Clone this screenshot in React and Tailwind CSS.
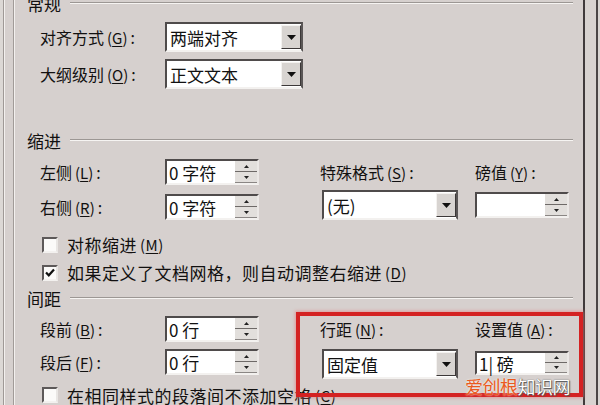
import React from 'react'

const Key = ({ k }) => (
  <span className="ml-[3px] text-[15px]">
    (<span className="underline underline-offset-2">{k}</span>)
  </span>
)

const Label = ({ text, k, colon = true, className = '' }) => (
  <div className={`flex items-center text-[16px] leading-none text-[#121010] ${className}`}>
    <span>{text}</span>
    <Key k={k} />
    {colon && <span className="ml-[3px]">:</span>}
  </div>
)

const Header = ({ title, className = '' }) => (
  <div className={`flex items-center h-[16px] pl-[12px] pr-[10px] ${className}`}>
    <span className="text-[17px] leading-none text-[#121010]">{title}</span>
    <div className="flex-1 ml-[9px] h-[2px] bg-[#9c9794] border-b border-[#f6f4f2]" />
  </div>
)

const Arrow = ({ up = false, size = 'big' }) =>
  size === 'big' ? (
    <svg width="9" height="5" viewBox="0 0 9 5">
      <polygon points="0,0 9,0 4.5,5" fill="#111" />
    </svg>
  ) : (
    <svg width="5" height="3" viewBox="0 0 5 3">
      <polygon points={up ? '0,3 5,3 2.5,0' : '0,0 5,0 2.5,3'} fill="#222" />
    </svg>
  )

const Combo = ({ text, className = '' }) => (
  <div
    className={`flex bg-white border-2 border-t-[#4f4b4b] border-l-[#4f4b4b] border-r-[#5a5656] border-b-[#f3f1ef] ${className}`}
  >
    <div className="flex-1 flex items-center pl-[3px] text-[17px] leading-none text-[#111]">{text}</div>
    <div className="w-[20px] my-[1px] bg-[#d8d4d1] border border-t-[#f4f2f0] border-l-[#f4f2f0] border-b-[#3c3838] border-r-[#3c3838] flex items-center justify-center">
      <Arrow />
    </div>
  </div>
)

const Spin = ({ text, className = '' }) => (
  <div
    className={`flex bg-white border-2 border-t-[#4f4b4b] border-l-[#4f4b4b] border-r-[#ebe8e6] border-b-[#f3f1ef] ${className}`}
  >
    <div className="flex-1 flex items-center pl-[2px] text-[17px] leading-none text-[#111]">{text}</div>
    <div className="w-[22px] flex flex-col bg-[#e2dfdc]">
      <div className="flex-1 flex items-center justify-center border-b border-[#6e6a68]">
        <Arrow up size="small" />
      </div>
      <div className="flex-1 flex items-center justify-center border-b border-[#8a8684]">
        <Arrow size="small" />
      </div>
    </div>
  </div>
)

const Check = ({ checked = false, children, className = '' }) => (
  <div className={`flex items-center h-[20px] pl-[27px] ${className}`}>
    <div className="w-[16px] h-[16px] bg-[#fbfaf9] border-2 border-t-[#5d5959] border-l-[#5d5959] border-r-[#e9e6e4] border-b-[#f3f1ef] flex items-center justify-center">
      {checked && (
        <svg width="10" height="9" viewBox="0 0 10 9">
          <path d="M1 4.5 L3.8 7.3 L9 1.5" stroke="#111" strokeWidth="2.2" fill="none" />
        </svg>
      )}
    </div>
    <div className="ml-[9px] text-[17px] leading-none tracking-[0.5px] text-[#121010] whitespace-nowrap flex items-center">
      {children}
    </div>
  </div>
)

export default function App() {
  return (
    <div className="relative w-[600px] h-[405px] overflow-hidden flex bg-[#d6d0ce] font-['Noto_Sans_CJK_SC','Noto_Sans',sans-serif]">
      {/* left window frame */}
      <div className="w-[3px] bg-[#dcd8d5]" />
      <div className="w-[1px] bg-[#9f9996]" />
      <div className="w-[1px] bg-[#f3f0ee]" />
      <div className="w-[8px]" />
      <div className="w-[1px] bg-[#a19b98]" />
      <div className="w-[1px] bg-[#f3f0ee]" />

      {/* dialog body */}
      <div className="flex-1 flex flex-col">
        <Header title="常规" className="mt-[-5px]" />
        <div className="flex items-center h-[30px] mt-[11px] pl-[25px]">
          <Label text="对齐方式" k="G" className="w-[125px]" />
          <Combo text="两端对齐" className="w-[138px] h-[30px]" />
        </div>
        <div className="flex items-center h-[30px] mt-[7px] pl-[25px]">
          <Label text="大纲级别" k="O" className="w-[125px]" />
          <Combo text="正文文本" className="w-[138px] h-[30px]" />
        </div>

        <Header title="缩进" className="mt-[43px]" />
        <div className="flex mt-[11px]">
          <div className="w-[305px] pl-[25px] flex flex-col">
            <div className="flex items-center h-[26px]">
              <Label text="左侧" k="L" className="w-[125px]" />
              <Spin text="0 字符" className="w-[94px] h-[26px]" />
            </div>
            <div className="flex items-center h-[26px] mt-[9px]">
              <Label text="右侧" k="R" className="w-[125px]" />
              <Spin text="0 字符" className="w-[94px] h-[26px]" />
            </div>
          </div>
          <div className="w-[155px] flex flex-col">
            <Label text="特殊格式" k="S" className="h-[26px]" />
            <Combo text="(无)" className="w-[136px] h-[30px] mt-[5px] ml-[2px]" />
          </div>
          <div className="flex flex-col">
            <Label text="磅值" k="Y" className="h-[26px]" />
            <Spin text="" className="w-[94px] h-[26px] mt-[7px]" />
          </div>
        </div>

        <Check className="mt-[15px]">
          对称缩进<Key k="M" />
        </Check>
        <Check checked className="mt-[8px]">
          如果定义了文档网格，则自动调整右缩进<Key k="D" />
        </Check>

        <Header title="间距" className="mt-[8px]" />
        <div className="flex mt-[10px]">
          <div className="w-[305px] pl-[25px] flex flex-col">
            <div className="flex items-center h-[26px]">
              <Label text="段前" k="B" className="w-[125px]" />
              <Spin text="0 行" className="w-[94px] h-[26px]" />
            </div>
            <div className="flex items-center h-[26px] mt-[7px]">
              <Label text="段后" k="F" className="w-[125px]" />
              <Spin text="0 行" className="w-[94px] h-[26px]" />
            </div>
          </div>
          <div className="w-[155px] flex flex-col">
            <Label text="行距" k="N" className="h-[26px]" />
            <Combo text="固定值" className="w-[136px] h-[30px] mt-[7px] ml-[2px]" />
          </div>
          <div className="flex flex-col">
            <Label text="设置值" k="A" className="h-[26px]" />
            <Spin text="1| 磅" className="w-[94px] h-[24px] mt-[9px]" />
          </div>
        </div>
        <Check className="mt-[6px]">
          在相同样式的段落间不添加空格<Key k="C" />
        </Check>
      </div>

      {/* right window frame */}
      <div className="w-[2px] bg-[#403b3b]" />
      <div className="w-[11px] bg-[#d8d3d0]" />
      <div className="w-[2px] bg-[#4a4545]" />
      <div className="w-[2px] bg-[#d9d5d2]" />

      {/* red annotation box */}
      <div className="absolute left-[296px] top-[312px] w-[287px] h-[85px] border-[4px] border-[#d42222] shadow-[0_0_3px_1px_rgba(230,120,120,0.6)]" />

      {/* watermark */}
      <div className="absolute left-[465px] top-[377px] text-[18px] leading-none tracking-[-0.5px] whitespace-nowrap">
        <span className="text-[#ea5a20] [text-shadow:0_0_2px_#fff]">爱创根</span>
        <span className="text-white [text-shadow:0_0_1px_#333,1px_1px_1px_#555]">知识网</span>
      </div>
    </div>
  )
}
